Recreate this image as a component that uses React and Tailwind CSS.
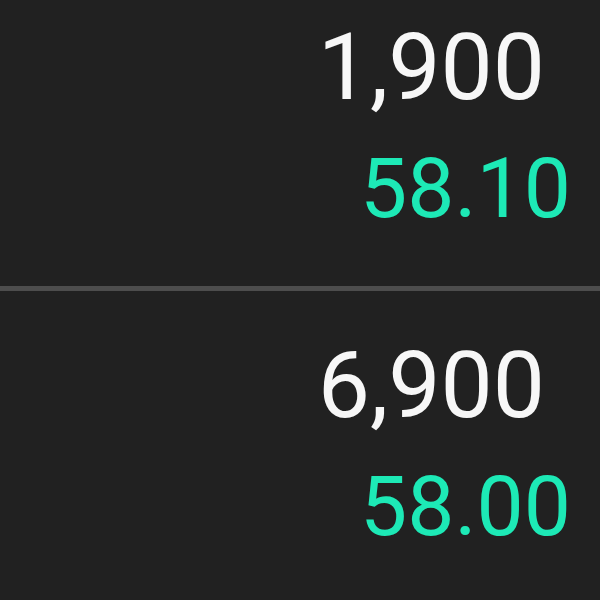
const rows = [
  { qty: '1,900', price: '58.10' },
  { qty: '6,900', price: '58.00' },
];

export default function App() {
  return (
    <div className="h-[600px] w-[600px] overflow-hidden bg-[#212121]" style={{ fontFamily: 'Roboto, "Noto Sans", sans-serif' }}>
      <div className="-mt-[27px]">
        {rows.map((r, i) => (
          <div key={i}>
            {i > 0 && <div className="h-[5px] bg-[#4d4d4d]" />}
            <div className="flex h-[313px] flex-col items-end pt-[48px]">
              <div className="pr-[55px] text-[93px] leading-none text-[#f7f7f7]">{r.qty}</div>
              <div className="mt-[33px] pr-[29px] text-[84px] leading-none text-[#1de9b6]">{r.price}</div>
            </div>
          </div>
        ))}
      </div>
    </div>
  );
}
